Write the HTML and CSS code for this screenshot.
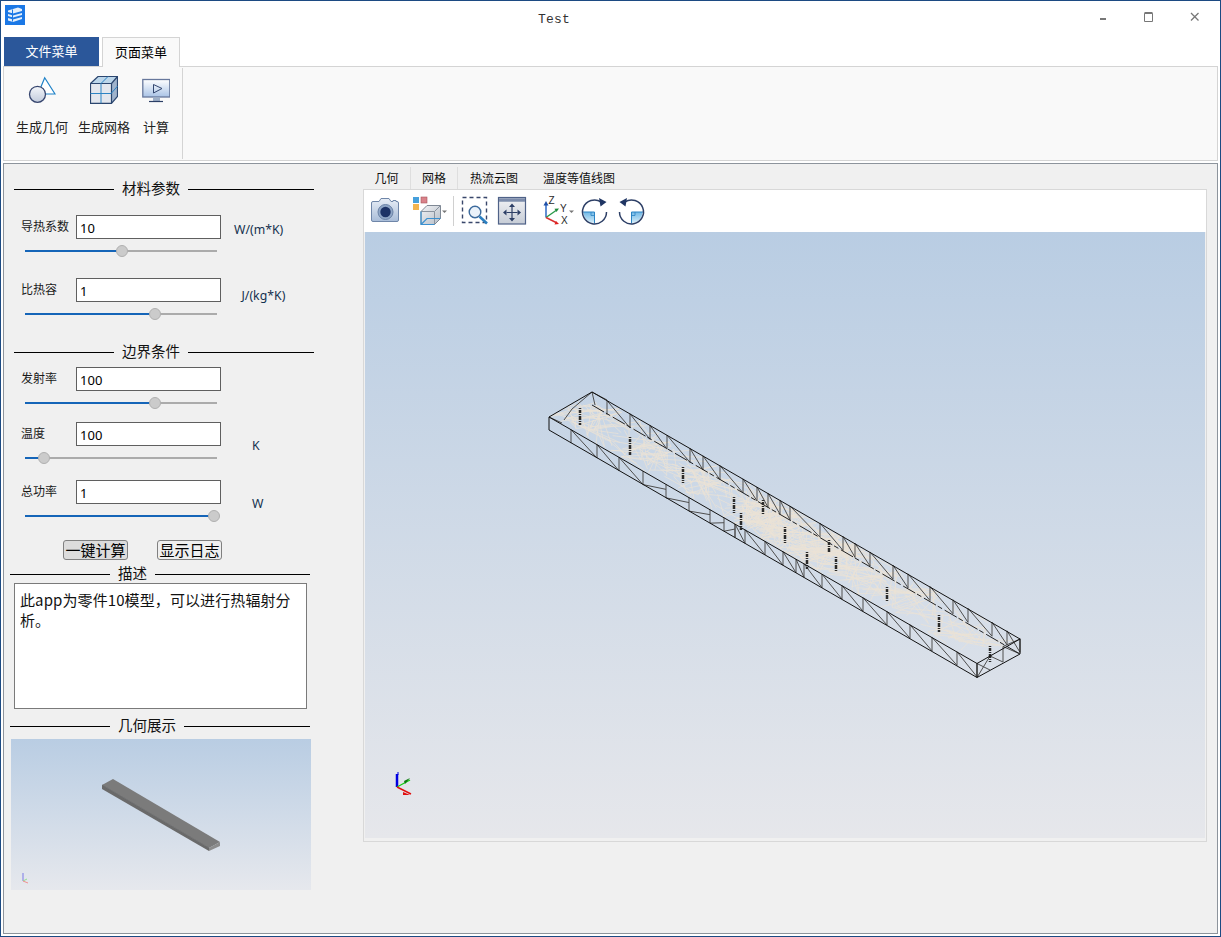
FILE: index.html
```html
<!DOCTYPE html>
<html lang="zh">
<head>
<meta charset="utf-8">
<title>Test</title>
<link rel="stylesheet" href="styles.css">
</head>
<body>
<div class="window">
  <header class="titlebar">
    <svg class="app-icon" viewBox="0 0 20 20"><rect width="20" height="20" fill="#1b78e6"/><path d="M3 5.500 13 2.500l4 1.500v2L8 8.500 3 7z M3 9l5 1.500 9-2.500v2L8 12.500 3 11z M3 13l5 1.500 9-2.500v2l-9 3-5-1.500z" fill="#e4effb"/><path d="M7.500 4.500v12M3 8.500h4M3 12.500h4" stroke="#1b78e6" stroke-width="1"/></svg>
    <div class="title">Test</div>
    <div class="controls">
      <div class="ctl"><svg width="10" height="10" viewBox="0 0 10 10"><path d="M2 7h6" stroke="#777" stroke-width="2"/></svg></div>
      <div class="ctl"><svg width="10" height="10" viewBox="0 0 10 10"><path d="M.5 1.500h8v8h-8z" fill="none" stroke="#777" stroke-width="1"/><path d="M.5 1h8" stroke="#777" stroke-width="2"/></svg></div>
      <div class="ctl"><svg width="10" height="10" viewBox="0 0 10 10"><path d="M1 1l7.500 7.500M8.500 1 1 8.500" stroke="#777" stroke-width="1.300"/></svg></div>
    </div>
  </header>

  <nav class="menutabs">
    <div class="menutab file">文件菜单</div>
    <div class="menutab page">页面菜单</div>
  </nav>

  <section class="ribbon">
    <div class="ribbon-group">
      <div class="ribbon-item">
        <svg class="ribbon-icon" viewBox="28 76 28 28">
          <defs><linearGradient id="g1" x1="0" y1="0" x2="0" y2="1"><stop offset="0" stop-color="#f4f6fa"/><stop offset="1" stop-color="#c2cbdc"/></linearGradient>
          <linearGradient id="g2" x1="0" y1="0" x2="0" y2="1"><stop offset="0" stop-color="#fff"/><stop offset="1" stop-color="#a9c3e6"/></linearGradient></defs>
          <path d="M44.700 77.800 55 94H38z" fill="#fff" stroke="#1f82c8" stroke-width="1.200"/>
          <circle cx="37.500" cy="94.300" r="8" fill="url(#g1)" stroke="#37466f" stroke-width="1.300"/>
        </svg>
        <span>生成几何</span>
      </div>
      <div class="ribbon-item">
        <svg class="ribbon-icon" viewBox="90 76 28 28">
          <path d="M90.500 83.500 98 76.500h19.500v20l-6 6.800H90.500z" fill="#e3e7ee"/>
          <path d="M90.500 83.500 98 76.500h19.500l-6 7z" fill="#bcd6ea"/>
          <path d="M111.500 83.500l6-7v20l-6 6.800z" fill="#9fb3cc"/>
          <path d="M90.500 83.500 98 76.500h19.500v20l-6 6.800H90.500zM90.500 83.500h21v19.800M111.500 83.500l6-7" fill="none" stroke="#2b466f" stroke-width="1.200"/>
          <path d="M101 83.500v19.800M90.500 93.500h21M101 83.500l7-7M111.500 93l6-6.800" fill="none" stroke="#2c84c4" stroke-width="1"/>
        </svg>
        <span>生成网格</span>
      </div>
      <div class="ribbon-item last">
        <svg class="ribbon-icon" viewBox="142 76 28 28">
          <rect x="142.800" y="79.500" width="27" height="17.500" fill="url(#g2)" stroke="#67789c" stroke-width="1.300"/>
          <path d="M153.500 84.500 162 88.500 153.500 93z" fill="none" stroke="#33466f" stroke-width="1"/>
          <path d="M153 97.500h7v4h-7z" fill="#9fb0c8"/>
          <path d="M149 101.500h14" stroke="#2b3f66" stroke-width="1.200"/>
        </svg>
        <span>计算</span>
      </div>
    </div>
  </section>

  <main class="workspace">
    <aside class="panel">
      <div class="section-title inset first"><i></i><span>材料参数</span><b></b></div>

      <div class="field first-field">
        <div class="field-row">
          <label>导热系数</label><div class="input">10</div><div class="unit u1">W/(m*K)</div>
        </div>
        <div class="slider"><div class="fill" style="width:50.5%"></div><div class="thumb" style="left:50.5%"></div></div>
      </div>
      <div class="field after-first">
        <div class="field-row">
          <label>比热容</label><div class="input">1</div><div class="unit u2">J/(kg*K)</div>
        </div>
        <div class="slider"><div class="fill" style="width:67.7%"></div><div class="thumb" style="left:67.7%"></div></div>
      </div>

      <div class="section-title inset second"><i></i><span>边界条件</span><b></b></div>

      <div class="field third-field">
        <div class="field-row">
          <label>发射率</label><div class="input">100</div>
        </div>
        <div class="slider"><div class="fill" style="width:67.7%"></div><div class="thumb" style="left:67.7%"></div></div>
      </div>
      <div class="field fourth-field">
        <div class="field-row">
          <label>温度</label><div class="input">100</div><div class="unit u3">K</div>
        </div>
        <div class="slider"><div class="fill" style="width:9.9%"></div><div class="thumb" style="left:9.9%"></div></div>
      </div>
      <div class="field fifth-field">
        <div class="field-row">
          <label>总功率</label><div class="input">1</div><div class="unit u3">W</div>
        </div>
        <div class="slider"><div class="fill" style="width:98.4%"></div><div class="thumb" style="left:98.4%"></div></div>
      </div>

      <div class="actions">
        <button class="btn primary">一键计算</button>
        <button class="btn">显示日志</button>
      </div>

      <div class="section-title desc-title"><i></i><span>描述</span><b></b></div>
      <div class="description">此app为零件10模型，可以进行热辐射分析。</div>

      <div class="section-title geo-title"><i></i><span>几何展示</span><b></b></div>
      <div class="preview">
        <svg class="preview-art" viewBox="11 739 300 151">
          <path d="M102 785 113 779 220 842 209 848z" fill="#7b7b7b"/>
          <path d="M102 785 209 848V851L102 789z" fill="#6a6a6a"/>
          <path d="M209 848 220 842V846L209 851z" fill="#8c8c8c"/>
          <path d="M102 785 209 848" stroke="#5c5c5c" stroke-width=".6" fill="none"/>
          <path d="M23 881V873" stroke="#7a7ae8" stroke-width="1"/>
          <path d="M23 881l4-2" stroke="#8ee08e" stroke-width="1"/>
          <path d="M23 881l5 2" stroke="#f09090" stroke-width="1"/>
        </svg>
      </div>
    </aside>

    <section class="viewer">
      <div class="viewer-tabs">
        <div class="vtab t1">几何</div>
        <div class="vtab t2">网格</div>
        <div class="vtab t3">热流云图</div>
        <div class="vtab t4">温度等值线图</div>
      </div>
      <div class="frame">
        <div class="toolbar">
          <svg class="tool w28" viewBox="371 196 28 32">
            <defs><linearGradient id="cam" x1="0" y1="0" x2="0" y2="1"><stop offset="0" stop-color="#e8eef6"/><stop offset="1" stop-color="#a8bcd8"/></linearGradient></defs>
            <path d="M373 201.500h6l2-3h8l2 3h2v-1h3v1h1q1.500 0 1.500 1.500v17q0 1.500-1.500 1.500h-24q-1.500 0-1.500-1.500v-17q0-1.500 1.500-1.500z" fill="url(#cam)" stroke="#6f86a8" stroke-width="1"/>
            <circle cx="385.500" cy="212" r="7.500" fill="#8fa6c6" stroke="#6a82a6"/>
            <circle cx="385.500" cy="212" r="5.200" fill="#1c3266"/>
          </svg>
          <svg class="tool w36 m14" viewBox="413 196 36 32">
            <defs><linearGradient id="cube" x1="0" y1="0" x2="1" y2="1"><stop offset="0" stop-color="#f4f5f7"/><stop offset="1" stop-color="#b4bcc6"/></linearGradient></defs>
            <rect x="413" y="197" width="6" height="6" fill="#46a0dc"/><rect x="421" y="197" width="6" height="6" fill="#d9828a" stroke="#a8565c" stroke-width=".6"/><rect x="413" y="204" width="6" height="6" fill="#f2b450"/>
            <path d="M427 205.500h13.500v13l-6 6h-13.500v-13z" fill="url(#cube)" stroke="#7f8894"/>
            <path d="M421 211.500h13.500v13M434.500 211.500l6-6" fill="none" stroke="#8a939f" stroke-width="1"/>
            <path d="M421 211.500v13h13.500M421 224.500l6-6h13.500" fill="none" stroke="#3a90d0" stroke-width="1.200"/>
            <path d="M442 210.500h5l-2.500 2.500z" fill="#777"/>
          </svg>
          <div class="tool-sep"></div>
          <svg class="tool w30 m6" viewBox="460 196 30 32">
            <rect x="462.500" y="197.500" width="24" height="25" fill="none" stroke="#39476b" stroke-width="1.400" stroke-dasharray="4 3"/>
            <circle cx="475" cy="212" r="5.800" fill="#eaf2fa" stroke="#3c6a9c" stroke-width="1.400"/>
            <path d="M479.500 216.500 487 223.500" stroke="#2b7fc0" stroke-width="2.600"/>
          </svg>
          <svg class="tool w30 m7" viewBox="497 196 30 32">
            <defs><linearGradient id="fit" x1="0" y1="0" x2="0" y2="1"><stop offset="0" stop-color="#f2f3f5"/><stop offset="1" stop-color="#c6ccd6"/></linearGradient></defs>
            <rect x="498.500" y="197.500" width="27" height="26.500" fill="url(#fit)" stroke="#4f6288" stroke-width="1.200"/>
            <path d="M499 200h26" stroke="#7c8cab" stroke-width="3.500"/>
            <path d="M512 207v11M506.500 212.500h11" stroke="#2d3f66" stroke-width="1.200"/>
            <path d="M512 203.500l-3 3.500h6zM512 221.500l-3-3.500h6zM503 212.500l3.500-3v6zM521 212.500l-3.500-3v6z" fill="#2d3f66"/>
          </svg>
          <svg class="tool w34 m16" viewBox="543 196 34 32">
            <path d="M546 217.500V204" stroke="#1f5fc0" stroke-width="1.400"/><path d="M546 201l-2.500 4.500h5z" fill="#1f4fa8"/>
            <path d="M546 217.500l10-7" stroke="#2a9a4a" stroke-width="1.400"/><path d="M559 208.500l-4.500 .3 2 3.200z" fill="#1f8a3c"/>
            <path d="M546 217.500l10 5" stroke="#d83030" stroke-width="1.400"/><path d="M559 224l-4.500 .4 1.500-3.400z" fill="#e02020"/>
            <text x="548.500" y="204" class="axis-letter">Z</text><text x="560" y="211.500" class="axis-letter">Y</text><text x="561" y="224" class="axis-letter">X</text>
            <path d="M569 210.500h5l-2.500 2.500z" fill="#777"/>
          </svg>
          <svg class="tool w28 m4" viewBox="581 196 28 32">
            <defs><linearGradient id="quad" x1="0" y1="0" x2="0" y2="1"><stop offset="0" stop-color="#6fb8e6"/><stop offset="1" stop-color="#d4ecf8"/></linearGradient></defs>
            <path d="M594.500 212h-11a11 11 0 0 0 11 11z" fill="url(#quad)"/>
            <path d="M583 212h11.500v11.500" fill="none" stroke="#2c84c4" stroke-width="1"/>
            <path d="M591 212v3.500h3.500" fill="none" stroke="#2c84c4" stroke-width=".8"/>
            <path d="M601 201.900A12 12 0 1 0 606.500 212" fill="none" stroke="#2d3f66" stroke-width="1.500"/>
            <path d="M599 198 606.500 202 600.500 206.500z" fill="#1f3563"/>
          </svg>
          <svg class="tool w28 m9" viewBox="618 196 28 32">
            <path d="M631.500 212h11a11 11 0 0 1-11 11z" fill="url(#quad)"/>
            <path d="M643 212h-11.500v11.500" fill="none" stroke="#2c84c4" stroke-width="1"/>
            <path d="M635 212v3.500h-3.500" fill="none" stroke="#2c84c4" stroke-width=".8"/>
            <path d="M625 201.900A12 12 0 1 1 619.500 212" fill="none" stroke="#2d3f66" stroke-width="1.500"/>
            <path d="M627 198 619.500 202 625.500 206.500z" fill="#1f3563"/>
          </svg>
        </div>
        <div class="canvas">
          <svg id="model" class="model" viewBox="365 232 840 606">
            <g id="mesh-top"></g>
            <g id="mesh-sides"></g>
            <path class="edge-dash" d="M592 405 1020 654"/>
            <g id="holes"></g>
            <path class="edge" d="M549 417 592 392 1020 639 977 663.500zM549 417V430L977 677.500V663.500M977 677.500 1020 654V639"/>
            <path class="axis-b" d="M397 787V774"/><path class="axis-b thin" d="M398 772V775"/>
            <path class="axis-g" d="M397 787 410 780"/>
            <path class="axis-r" d="M397 787 411 794"/>
            <path d="M410 778l-6 3 1 3z" fill="#0c7a10"/>
            <path d="M410 795l-7-3 0 3z" fill="#e01010"/>
          </svg>
        </div>
      </div>
    </section>
  </main>
</div>
<script src="script.js"></script>
</body>
</html>
```

FILE: styles.css
```css
* { box-sizing: border-box; }
html, body { margin: 0; padding: 0; }
body {
  width: 1221px;
  height: 937px;
  overflow: hidden;
  font-family: "Noto Sans CJK SC", "Noto Sans", sans-serif;
  color: #000;
  background: #fff;
}
.window {
  width: 1221px;
  height: 937px;
  border: 1px solid #1c4a82;
  padding: 0 2px 2px;
  display: flex;
  flex-direction: column;
  background: #fff;
}

/* title bar */
.titlebar { height: 36px; display: flex; align-items: flex-start; flex: none; }
.app-icon { width: 20px; height: 20px; margin: 4px 0 0 2px; flex: none; }
.title {
  margin: 10px 0 0 513px;
  font: 13px/18px "Liberation Mono", monospace;
  letter-spacing: .2px;
  color: #333;
}
.controls { margin-left: auto; display: flex; }
.ctl { width: 46px; height: 30px; display: flex; align-items: center; justify-content: center; padding-bottom: 0; }
.ctl svg { margin-top: 2px; }

/* menu tabs */
.menutabs { height: 29px; flex: none; display: flex; padding-left: 1px; position: relative; z-index: 1; }
.menutab { font-size: 13px; line-height: 28px; text-align: center; }
.menutab.file { width: 95px; height: 29px; background: #2b579a; color: #fff; }
.menutab.page {
  width: 78px;
  height: 30px;
  margin-left: 3px;
  background: #f9f9f9;
  border: 1px solid #d4d4d4;
  border-bottom: 0;
}

/* ribbon */
.ribbon {
  height: 95px;
  flex: none;
  background: #f9f9f9;
  border: 1px solid #d4d4d4;
  padding-top: 1px;
}
.ribbon-group {
  width: 179px;
  height: 91px;
  border-right: 1px solid #d4d4d4;
  display: flex;
  gap: 10px;
  padding: 8px 0 0 12px;
}
.ribbon-item { display: flex; flex-direction: column; align-items: center; font-size: 13px; line-height: 20px; color: #222; }
.ribbon-item.last { margin-left: 2px; }
.ribbon-icon { width: 28px; height: 28px; margin-bottom: 13px; }

/* workspace */
.workspace {
  flex: 1;
  margin-top: 2px;
  display: flex;
  background: #f0f0f0;
  border: 1px solid #8d949c;
}
.panel { width: 359px; flex: none; padding-left: 6px; }

.section-title { display: flex; align-items: center; gap: 8px; width: 300px; height: 18px; font-size: 14.500px; line-height: 18px; }
.section-title i { width: 100px; height: 1px; background: #000; flex: none; }
.section-title b { flex: 1; height: 1px; background: #000; }
.section-title span { white-space: nowrap; color: #111; padding-bottom: 2px; }
.section-title.inset { margin-left: 4px; }
.section-title.first { margin-top: 16px; }
.section-title.second { margin-top: 23px; }
.desc-title { margin-top: 5px; }
.geo-title { margin-top: 8px; }

.field { height: 42px; margin-left: 11px; }
.first-field { margin-top: 17px; }
.after-first { margin-top: 21px; }
.third-field { margin-top: 6px; }
.fourth-field { margin-top: 13px; }
.fifth-field { margin-top: 16px; }

.field-row { display: flex; align-items: flex-start; height: 24px; }
.field-row label { width: 55px; flex: none; font-size: 12px; line-height: 22px; color: #1a1a1a; }
.input {
  width: 145px;
  height: 24px;
  flex: none;
  background: #fff;
  border: 1px solid #5f5f5f;
  padding-left: 3px;
  font: 13px/24px "Noto Sans", sans-serif;
  letter-spacing: .1px;
}
.unit { font: 12.300px/16px "Noto Sans", sans-serif; color: #14304f; white-space: nowrap; }
.u1 { margin: 7px 0 0 13px; }
.u2 { margin: 10px 0 0 20.500px; }
.u3 { margin: 16px 0 0 31px; }

.slider { position: relative; width: 192px; height: 2px; margin: 11px 0 0 4px; background: #ababab; }
.fill { height: 2px; background: #1565b8; }
.thumb {
  position: absolute;
  top: -5px;
  width: 12px;
  height: 12px;
  margin-left: -6px;
  border-radius: 50%;
  background: #cbcbcb;
  border: 1px solid #b0b0b0;
}

.actions { display: flex; gap: 29px; margin: 18px 0 0 53px; }
.btn {
  width: 65px;
  height: 20px;
  padding: 0;
  font: 15px/18px "Noto Sans CJK SC", sans-serif;
  color: #000;
  background: #efefef;
  border: 1px solid #808080;
  border-radius: 3px;
}
.btn.primary { background: #dcdcdc; }

.description {
  width: 293px;
  height: 126px;
  margin-left: 4px;
  background: #fff;
  border: 1px solid #7a7a7a;
  padding: 6px 5px;
  font-size: 15px;
  line-height: 20px;
  letter-spacing: .1px;
  color: #111;
}

.preview {
  width: 300px;
  height: 151px;
  margin: 4px 0 0 1px;
  background: linear-gradient(#b9cde3, #e6e8ed);
}
.preview-art { display: block; width: 300px; height: 151px; }

/* viewer */
.viewer { flex: none; width: 844px; padding-top: 3px; display: flex; flex-direction: column; align-items: stretch; }
.viewer-tabs { height: 22px; display: flex; flex: none; }
.vtab { font-size: 12px; line-height: 22px; text-align: center; color: #111; border-right: 1px solid #dedede; }
.vtab.t1 { width: 48px; }
.vtab.t2 { width: 47px; }
.vtab.t3 { width: 72px; border-right: 0; }
.vtab.t4 { width: 98px; border-right: 0; }
.frame { height: 653px; flex: none; border: 1px solid #d8d8d8; padding: 0 1px 3px; background: #f0f0f0; }
.toolbar { height: 42px; margin: 0 -1px; background: #fff; display: flex; align-items: flex-start; padding: 6px 0 0 7px; }
.tool { height: 32px; flex: none; display: block; }
.w28 { width: 28px; }
.w30 { width: 30px; }
.w34 { width: 34px; }
.w36 { width: 36px; }
.m4 { margin-left: 4px; }
.m6 { margin-left: 6px; }
.m7 { margin-left: 7px; }
.m9 { margin-left: 9px; }
.m14 { margin-left: 14px; }
.m16 { margin-left: 16px; }
.tool-sep { width: 1px; height: 30px; margin-left: 4px; background: #d0d0d0; flex: none; }
.axis-letter { font: 10px "Liberation Sans", sans-serif; fill: #2a2a2a; }

.canvas { height: 606px; background: linear-gradient(#b9cde3, #e6e7eb); }
.model { display: block; width: 840px; height: 606px; }
.edge { fill: none; stroke: #111; stroke-width: 1; }
.edge-dash { fill: none; stroke: #222; stroke-width: 1; stroke-dasharray: 14 2 5 3; }
.mesh-line { stroke: #ebe3d6; stroke-width: .7; fill: none; }
.side-line { stroke: #4e4e4e; stroke-width: 1; fill: none; }
.hole { stroke: #2a2a2a; stroke-width: 2.500; stroke-dasharray: 1 1 3 1 1 1 4 1; fill: none; }
.axis-b { stroke: #0000e0; stroke-width: 2.500; }
.axis-b.thin { stroke-width: 1; }
.axis-g { stroke: #12d012; stroke-width: 1.300; }
.axis-r { stroke: #e01010; stroke-width: 1.500; }
```

FILE: script.js
```js
(function () {
  var NS = 'http://www.w3.org/2000/svg';
  var seed = 12345;
  function rnd() { seed = (seed * 16807) % 2147483647; return seed / 2147483647; }
  function add(parent, cls, d) {
    var p = document.createElementNS(NS, 'path');
    p.setAttribute('class', cls);
    p.setAttribute('d', d);
    parent.appendChild(p);
  }
  function top(u, v) { return [549 + 428 * u + 43 * v, 417 + 246.5 * u - 25 * v]; }

  // top-face triangulation: long thin triangles fanning out across the full width
  var holesUV = [.05, .19, .31, .43, .45, .5, .55, .6, .62, .7, .79, .92];
  var d = '';
  holesUV.forEach(function (c, idx) {
    var fans = idx < 7 ? 26 : 20;
    for (var i = 0; i < fans; i++) {
      var u = Math.max(0, Math.min(1, c + (rnd() - .5) * .06));
      var v = rnd();
      var a = top(u, v);
      for (var k = 0; k < 2; k++) {
        var u2 = Math.max(0, Math.min(1, c + (rnd() - .5) * .17));
        var v2 = rnd();
        var b = top(u2, v2);
        d += 'M' + a[0].toFixed(1) + ' ' + a[1].toFixed(1) + 'L' + b[0].toFixed(1) + ' ' + b[1].toFixed(1);
      }
    }
  });
  add(document.getElementById('mesh-top'), 'mesh-line', d);

  // wall zigzags: a strut up at each node, a brace to the next node
  var sides = document.getElementById('mesh-sides');
  function wall(xs, x0, y0, h) {
    var s = '';
    function yt(x) { return y0 + (x - x0) * .5755; }
    for (var i = 0; i < xs.length; i++) {
      var x = xs[i];
      s += 'M' + x + ' ' + yt(x) + 'L' + x + ' ' + (yt(x) + h);
      if (i + 1 < xs.length) {
        var nx = xs[i + 1];
        s += 'M' + x + ' ' + yt(x) + 'L' + nx + ' ' + (yt(nx) + h);
      }
    }
    add(sides, 'side-line', s);
  }
  wall([571, 597, 619, 643], 549, 417, 13.5);
  wall([735, 745, 765, 783, 796, 804, 822, 842, 863, 887, 910, 932, 957, 977], 549, 417, 13.5);
  var f = '';
  [[643, 666], [666, 689], [689, 710], [710, 724], [724, 735]].forEach(function (p) {
    var y0 = 417 + (p[0] - 549) * .5755 + 13.5, y1 = 417 + (p[1] - 549) * .5755;
    f += 'M' + p[0] + ' ' + y0 + 'L' + p[1] + ' ' + (y1 + 5) + 'M' + p[1] + ' ' + y1 + 'V' + (y1 + 13.5);
  });
  add(sides, 'side-line', f);
  wall([607, 630, 650, 667, 690, 703, 720, 743, 757, 768, 780, 790, 820, 843, 855, 870, 893, 908, 930, 953, 968, 992, 1007, 1020], 592, 392, 14);
  add(sides, 'side-line', 'M549 417 562 423M572 409 564 420M592 392 572 409M592 392 595 405M592 392 607 400M977 663.500 990 670M977 677.500 990 656 1003 662V646.500L1020 654M1020 639 1003 646.500');

  // hole markers
  var marks = [[580, 408, 425], [630, 437, 455], [683, 467, 483], [734, 497, 513], [741, 513, 530], [763, 500, 515],
    [785, 527, 543], [807, 552, 569], [829, 540, 553], [836, 557, 572], [887, 587, 602], [939, 615, 632], [990, 646, 662]];
  var h = document.getElementById('holes');
  marks.forEach(function (m) { add(h, 'hole', 'M' + m[0] + ' ' + m[1] + 'V' + m[2]); });
})();
```
